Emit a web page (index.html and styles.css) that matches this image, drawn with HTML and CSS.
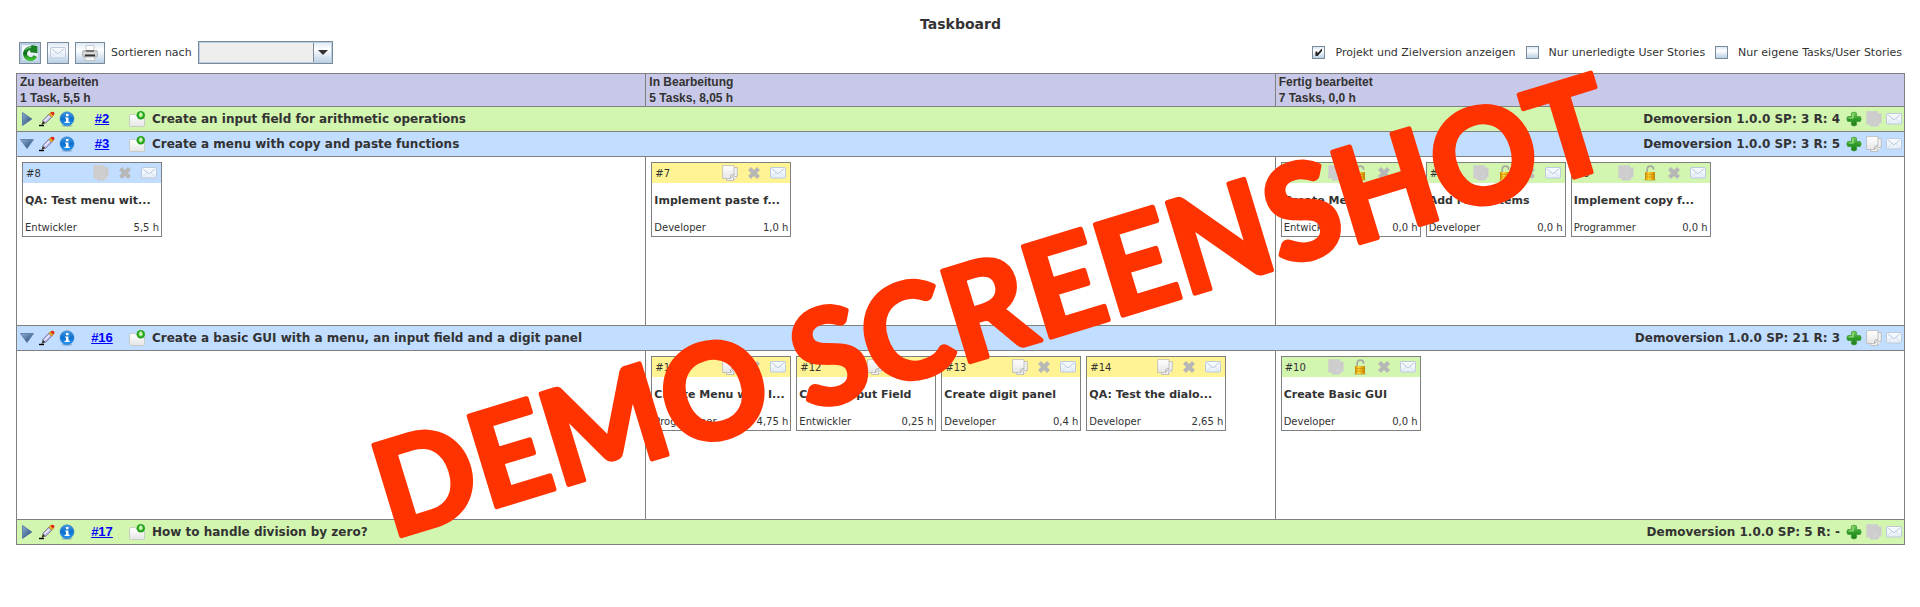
FILE: index.html
```html
<!DOCTYPE html>
<html lang="de">
<head>
<meta charset="utf-8">
<title>Taskboard</title>
<link rel="stylesheet" href="styles.css">
</head>
<body>
<svg class="sprite" width="0" height="0" aria-hidden="true">
  <defs>
    <linearGradient id="g-tri" x1="0" y1="0" x2="1" y2="1"><stop offset="0" stop-color="#8fb0d8"/><stop offset="1" stop-color="#23446f"/></linearGradient>
    <linearGradient id="g-info" x1="0" y1="0" x2="0" y2="1"><stop offset="0" stop-color="#4a9be0"/><stop offset=".5" stop-color="#0a6fd0"/><stop offset="1" stop-color="#2b9af0"/></linearGradient>
    <linearGradient id="g-page" x1="0" y1="0" x2="0" y2="1"><stop offset="0" stop-color="#ffffff"/><stop offset="1" stop-color="#e6e6e6"/></linearGradient>
    <linearGradient id="g-plus" x1="0" y1="0" x2="0" y2="1"><stop offset="0" stop-color="#7bd05c"/><stop offset=".5" stop-color="#2f9c28"/><stop offset="1" stop-color="#1d7d1b"/></linearGradient>
    <linearGradient id="g-lock" x1="0" y1="0" x2="1" y2="0"><stop offset="0" stop-color="#c88a00"/><stop offset=".35" stop-color="#ffd83a"/><stop offset="1" stop-color="#c98500"/></linearGradient>
    <linearGradient id="g-mail" x1="0" y1="0" x2="0" y2="1"><stop offset="0" stop-color="#ffffff"/><stop offset="1" stop-color="#e4edf8"/></linearGradient>
    <linearGradient id="g-arrow" x1="0" y1="0" x2="0" y2="1"><stop offset="0" stop-color="#1f8a2c"/><stop offset=".5" stop-color="#0c6d1c"/><stop offset="1" stop-color="#3fc12e"/></linearGradient>
    <radialGradient id="g-dot"><stop offset="0" stop-color="#c5f5a5"/><stop offset=".4" stop-color="#7bd657"/><stop offset=".65" stop-color="#1fa61a"/><stop offset="1" stop-color="#2aa11f"/></radialGradient>
  </defs>
  <symbol id="i-closed" viewBox="0 0 16 16"><path d="M3.500 1.500 12.800 8 3.500 14.500z" fill="url(#g-tri)" stroke="#4d6f9e" stroke-width=".8"/></symbol>
  <symbol id="i-open" viewBox="0 0 16 16"><path d="M1.500 3.500H14.500L8 12.500z" fill="url(#g-tri)" stroke="#5577a4" stroke-width=".8"/></symbol>
  <symbol id="i-pencil" viewBox="0 0 16 16">
    <path d="M0 14.500H5" stroke="#000" stroke-width="1.400"/>
    <path d="M2.500 14 3.800 9.800 6.300 12.300z" fill="#3a3020"/>
    <path d="M3.800 9.600 9.800 3.300 12.700 6.200 6.500 12.300z" fill="#c3bff0" stroke="#4c4a70" stroke-width=".7"/>
    <path d="M5.500 10 10.600 4.800" stroke="#eeeeff" stroke-width="1.200"/>
    <path d="M9.800 3.300 11.300 1.800 14.200 4.700 12.700 6.200z" fill="#f3b21a" stroke="#8a5a10" stroke-width=".4"/>
    <path d="M11.300 1.800Q13 0 15 1.200 16.200 3 14.200 4.700z" fill="#dc2a12"/>
  </symbol>
  <symbol id="i-info" viewBox="0 0 16 16">
    <ellipse cx="8" cy="14.800" rx="5.500" ry="1" fill="#5f88ac" opacity=".45"/>
    <circle cx="8" cy="7.800" r="7" fill="url(#g-info)" stroke="#2d78c4" stroke-width=".5"/>
    <path d="M7 3h2.500v2.200H7zM6 6.400h3.500v4.400h1.200V12H5.600v-1.200H7V7.600H6z" fill="#fff"/>
  </symbol>
  <symbol id="i-folder" viewBox="0 0 16 16">
    <path d="M.5 5Q.5 3.500 2 3.500H6L7.200 4.800H15.500V14.500Q15.500 15.500 14.500 15.500H1.500Q.5 15.500.5 14.500z" fill="url(#g-page)" stroke="#c3c9c0" stroke-width=".9"/>
    <circle cx="11.800" cy="4.200" r="4.200" fill="url(#g-dot)"/>
    <ellipse cx="11.800" cy="3.500" rx="1.500" ry="2.200" fill="#e4fad3" opacity=".75"/>
  </symbol>
  <symbol id="i-plus" viewBox="0 0 16 16">
    <path d="M5.400 2Q8 .2 10.600 2V5.500H14.200Q16.200 8 14.200 10.500H10.600V14Q8 16.200 5.400 14V10.500H1.800Q-.2 8 1.800 5.500H5.400z" fill="url(#g-plus)" stroke="#3d9a35" stroke-width=".7"/>
    <path d="M7 2.500V7H2.600" stroke="#a5e48a" stroke-width="1.200" fill="none"/>
  </symbol>
  <symbol id="i-page" viewBox="0 0 16 16">
    <path d="M4.500 2.500H15.300V11L11.500 15.500H4.500z" fill="#f1f1f1" stroke="#b5b5b5" stroke-width=".8"/>
    <path d="M.6.600H12V9.500L8.500 13.500H.6z" fill="url(#g-page)" stroke="#b9b9b9" stroke-width=".8"/>
    <path d="M8.500 13.500 8.800 10.200 12 9.500zM11.500 15.500 11.800 12 15.300 11" fill="#fff" stroke="#aaa" stroke-width=".8"/>
  </symbol>
  <symbol id="i-page-off" viewBox="0 0 16 16">
    <path d="M4 2.500H15.500V11.500L11.500 15.500H4z" fill="#cbcbcb"/>
    <path d="M.3.300H12V10L9 13.500H.3z" fill="#cdcdcd"/>
    <path d="M9 13.500 9.500 11 12 10M12 15 12.500 12.500 15.500 11.500" fill="none" stroke="#dadada" stroke-width=".8"/>
  </symbol>
  <symbol id="i-x" viewBox="0 0 16 16"><path d="M3.500 3.500 12.500 12.500M12.500 3.500 3.500 12.500" stroke="#b7b7b7" stroke-width="4.200"/></symbol>
  <symbol id="i-mail" viewBox="0 0 16 16">
    <rect x=".5" y="2.500" width="15" height="10.500" rx=".8" fill="url(#g-mail)" stroke="#bccbdc"/>
    <path d="M1.500 12 6 7.700M14.500 12 10 7.700" stroke="#d0dceb" stroke-width=".8" fill="none"/>
    <path d="M1.500 3.600 8 8.800 14.500 3.600" fill="#f4f8fd" stroke="#aec2da" stroke-width=".9"/>
  </symbol>
  <symbol id="i-lock" viewBox="0 0 16 16">
    <ellipse cx="8" cy="15" rx="6.500" ry=".8" fill="#a08a30" opacity=".5"/>
    <path d="M5.200 7.500V4.200Q5.200 1.200 8.300 1.200 11.600 1.200 11.600 4.800" fill="none" stroke="#a9a9a0" stroke-width="1.700"/>
    <rect x="3" y="7" width="10" height="8" fill="url(#g-lock)"/>
    <path d="M3 9.500h10M3 12h10" stroke="#b87900" stroke-width=".5"/>
  </symbol>
  <symbol id="i-refresh" viewBox="0 0 16 16">
    <path d="M13.300 11.200A5.400 5.400 0 1 1 10.200 3.600" fill="none" stroke="url(#g-arrow)" stroke-width="4"/>
    <path d="M9.500 0 15.500 1V8.200L8 7.200z" fill="#1b7f28"/>
    <path d="M3.500 5Q5.500 2 9 2.500" fill="none" stroke="#8fd58a" stroke-width="1"/>
  </symbol>
  <symbol id="i-print" viewBox="0 0 16 16">
    <path d="M4 .5H12V6H4z" fill="#fdfdfd" stroke="#b9bec4" stroke-width=".8"/>
    <rect x=".6" y="5.500" width="14.800" height="6.500" rx="1" fill="#c9c9c9" stroke="#a5a5a5" stroke-width=".7"/>
    <path d="M4 6H12" stroke="#555" stroke-width="1.400"/>
    <path d="M3 10.500H13" stroke="#333" stroke-width="2"/>
    <path d="M1 8.200H15" stroke="#e8e8e8" stroke-width="1"/>
    <path d="M3.500 12H12.500L13.200 15.500H2.800z" fill="#f7f7f7" stroke="#b5b5b5" stroke-width=".7"/>
  </symbol>
</svg>

<div class="page">
  <h1 class="title">Taskboard</h1>

  <div class="toolbar">
    <div class="tools">
      <button class="tool tool-active" type="button" aria-label="Aktualisieren"><svg class="icon"><use href="#i-refresh"/></svg></button>
      <button class="tool" type="button" aria-label="E-Mail"><svg class="icon"><use href="#i-mail"/></svg></button>
      <button class="tool tool-wide" type="button" aria-label="Drucken"><svg class="icon"><use href="#i-print"/></svg></button>
      <label for="sort">Sortieren nach</label>
      <span class="select-wrap">
        <select class="select" id="sort"><option></option></select>
        <svg class="select-arrow" viewBox="0 0 10 5" aria-hidden="true"><path d="M0 0H10L5 5z" fill="#333"/></svg>
      </span>
    </div>
    <div class="filters">
      <label class="filter"><input class="check" type="checkbox" checked>Projekt und Zielversion anzeigen</label>
      <label class="filter"><input class="check" type="checkbox">Nur unerledigte User Stories</label>
      <label class="filter"><input class="check" type="checkbox">Nur eigene Tasks/User Stories</label>
    </div>
  </div>

  <table class="board">
    <thead>
      <tr>
        <th scope="col">Zu bearbeiten<br>1 Task, 5,5 h</th>
        <th scope="col">In Bearbeitung<br>5 Tasks, 8,05 h</th>
        <th scope="col">Fertig bearbeitet<br>7 Tasks, 0,0 h</th>
      </tr>
    </thead>
    <tbody>
      <tr>
        <td class="story story-green" colspan="3">
          <div class="story-bar">
            <button class="ib" type="button" aria-label="Aufklappen"><svg class="icon"><use href="#i-closed"/></svg></button>
            <button class="ib" type="button" aria-label="Bearbeiten"><svg class="icon"><use href="#i-pencil"/></svg></button>
            <button class="ib" type="button" aria-label="Info"><svg class="icon"><use href="#i-info"/></svg></button>
            <a class="story-id" href="#2">#2</a>
            <svg class="icon" aria-hidden="true"><use href="#i-folder"/></svg>
            <span class="story-name">Create an input field for arithmetic operations</span>
            <span class="story-meta">Demoversion 1.0.0 SP: 3 R: 4</span>
            <button class="ib" type="button" aria-label="Neuer Task"><svg class="icon"><use href="#i-plus"/></svg></button>
            <button class="ib" type="button" aria-label="Notizen"><svg class="icon"><use href="#i-page-off"/></svg></button>
            <button class="ib" type="button" aria-label="E-Mail"><svg class="icon"><use href="#i-mail"/></svg></button>
          </div>
        </td>
      </tr>
      <tr>
        <td class="story story-blue" colspan="3">
          <div class="story-bar">
            <button class="ib" type="button" aria-label="Zuklappen"><svg class="icon"><use href="#i-open"/></svg></button>
            <button class="ib" type="button" aria-label="Bearbeiten"><svg class="icon"><use href="#i-pencil"/></svg></button>
            <button class="ib" type="button" aria-label="Info"><svg class="icon"><use href="#i-info"/></svg></button>
            <a class="story-id" href="#3">#3</a>
            <svg class="icon" aria-hidden="true"><use href="#i-folder"/></svg>
            <span class="story-name">Create a menu with copy and paste functions</span>
            <span class="story-meta">Demoversion 1.0.0 SP: 3 R: 5</span>
            <button class="ib" type="button" aria-label="Neuer Task"><svg class="icon"><use href="#i-plus"/></svg></button>
            <button class="ib" type="button" aria-label="Notizen"><svg class="icon"><use href="#i-page"/></svg></button>
            <button class="ib" type="button" aria-label="E-Mail"><svg class="icon"><use href="#i-mail"/></svg></button>
          </div>
        </td>
      </tr>
      <tr>
        <td class="lane"><div class="cards">
          <article class="card card-blue">
            <header class="card-head"><span class="card-id">#8</span><button class="ib" type="button" aria-label="Notizen"><svg class="icon"><use href="#i-page-off"/></svg></button><button class="ib" type="button" aria-label="Löschen"><svg class="icon"><use href="#i-x"/></svg></button><button class="ib" type="button" aria-label="E-Mail"><svg class="icon"><use href="#i-mail"/></svg></button></header>
            <h2 class="card-title">QA: Test menu wit...</h2>
            <footer class="card-foot"><span>Entwickler</span><span>5,5 h</span></footer>
          </article>
        </div></td>
        <td class="lane"><div class="cards">
          <article class="card card-yellow">
            <header class="card-head"><span class="card-id">#7</span><button class="ib" type="button" aria-label="Notizen"><svg class="icon"><use href="#i-page"/></svg></button><button class="ib" type="button" aria-label="Löschen"><svg class="icon"><use href="#i-x"/></svg></button><button class="ib" type="button" aria-label="E-Mail"><svg class="icon"><use href="#i-mail"/></svg></button></header>
            <h2 class="card-title">Implement paste f...</h2>
            <footer class="card-foot"><span>Developer</span><span>1,0 h</span></footer>
          </article>
        </div></td>
        <td class="lane"><div class="cards">
          <article class="card card-green">
            <header class="card-head"><span class="card-id">#4</span><button class="ib" type="button" aria-label="Notizen"><svg class="icon"><use href="#i-page-off"/></svg></button><button class="ib" type="button" aria-label="Entsperren"><svg class="icon"><use href="#i-lock"/></svg></button><button class="ib" type="button" aria-label="Löschen"><svg class="icon"><use href="#i-x"/></svg></button><button class="ib" type="button" aria-label="E-Mail"><svg class="icon"><use href="#i-mail"/></svg></button></header>
            <h2 class="card-title">Create Menu</h2>
            <footer class="card-foot"><span>Entwickler</span><span>0,0 h</span></footer>
          </article>
          <article class="card card-green">
            <header class="card-head"><span class="card-id">#5</span><button class="ib" type="button" aria-label="Notizen"><svg class="icon"><use href="#i-page-off"/></svg></button><button class="ib" type="button" aria-label="Entsperren"><svg class="icon"><use href="#i-lock"/></svg></button><button class="ib" type="button" aria-label="Löschen"><svg class="icon"><use href="#i-x"/></svg></button><button class="ib" type="button" aria-label="E-Mail"><svg class="icon"><use href="#i-mail"/></svg></button></header>
            <h2 class="card-title">Add Menu Items</h2>
            <footer class="card-foot"><span>Developer</span><span>0,0 h</span></footer>
          </article>
          <article class="card card-green">
            <header class="card-head"><span class="card-id">#6</span><button class="ib" type="button" aria-label="Notizen"><svg class="icon"><use href="#i-page-off"/></svg></button><button class="ib" type="button" aria-label="Entsperren"><svg class="icon"><use href="#i-lock"/></svg></button><button class="ib" type="button" aria-label="Löschen"><svg class="icon"><use href="#i-x"/></svg></button><button class="ib" type="button" aria-label="E-Mail"><svg class="icon"><use href="#i-mail"/></svg></button></header>
            <h2 class="card-title">Implement copy f...</h2>
            <footer class="card-foot"><span>Programmer</span><span>0,0 h</span></footer>
          </article>
        </div></td>
      </tr>
      <tr>
        <td class="story story-blue" colspan="3">
          <div class="story-bar">
            <button class="ib" type="button" aria-label="Zuklappen"><svg class="icon"><use href="#i-open"/></svg></button>
            <button class="ib" type="button" aria-label="Bearbeiten"><svg class="icon"><use href="#i-pencil"/></svg></button>
            <button class="ib" type="button" aria-label="Info"><svg class="icon"><use href="#i-info"/></svg></button>
            <a class="story-id" href="#16">#16</a>
            <svg class="icon" aria-hidden="true"><use href="#i-folder"/></svg>
            <span class="story-name">Create a basic GUI with a menu, an input field and a digit panel</span>
            <span class="story-meta">Demoversion 1.0.0 SP: 21 R: 3</span>
            <button class="ib" type="button" aria-label="Neuer Task"><svg class="icon"><use href="#i-plus"/></svg></button>
            <button class="ib" type="button" aria-label="Notizen"><svg class="icon"><use href="#i-page"/></svg></button>
            <button class="ib" type="button" aria-label="E-Mail"><svg class="icon"><use href="#i-mail"/></svg></button>
          </div>
        </td>
      </tr>
      <tr>
        <td class="lane"></td>
        <td class="lane"><div class="cards">
          <article class="card card-yellow">
            <header class="card-head"><span class="card-id">#11</span><button class="ib" type="button" aria-label="Notizen"><svg class="icon"><use href="#i-page"/></svg></button><button class="ib" type="button" aria-label="Löschen"><svg class="icon"><use href="#i-x"/></svg></button><button class="ib" type="button" aria-label="E-Mail"><svg class="icon"><use href="#i-mail"/></svg></button></header>
            <h2 class="card-title">Create Menu with I...</h2>
            <footer class="card-foot"><span>Programmer</span><span>4,75 h</span></footer>
          </article>
          <article class="card card-yellow">
            <header class="card-head"><span class="card-id">#12</span><button class="ib" type="button" aria-label="Notizen"><svg class="icon"><use href="#i-page"/></svg></button><button class="ib" type="button" aria-label="Löschen"><svg class="icon"><use href="#i-x"/></svg></button><button class="ib" type="button" aria-label="E-Mail"><svg class="icon"><use href="#i-mail"/></svg></button></header>
            <h2 class="card-title">Create Input Field</h2>
            <footer class="card-foot"><span>Entwickler</span><span>0,25 h</span></footer>
          </article>
          <article class="card card-yellow">
            <header class="card-head"><span class="card-id">#13</span><button class="ib" type="button" aria-label="Notizen"><svg class="icon"><use href="#i-page"/></svg></button><button class="ib" type="button" aria-label="Löschen"><svg class="icon"><use href="#i-x"/></svg></button><button class="ib" type="button" aria-label="E-Mail"><svg class="icon"><use href="#i-mail"/></svg></button></header>
            <h2 class="card-title">Create digit panel</h2>
            <footer class="card-foot"><span>Developer</span><span>0,4 h</span></footer>
          </article>
          <article class="card card-yellow">
            <header class="card-head"><span class="card-id">#14</span><button class="ib" type="button" aria-label="Notizen"><svg class="icon"><use href="#i-page"/></svg></button><button class="ib" type="button" aria-label="Löschen"><svg class="icon"><use href="#i-x"/></svg></button><button class="ib" type="button" aria-label="E-Mail"><svg class="icon"><use href="#i-mail"/></svg></button></header>
            <h2 class="card-title">QA: Test the dialo...</h2>
            <footer class="card-foot"><span>Developer</span><span>2,65 h</span></footer>
          </article>
        </div></td>
        <td class="lane"><div class="cards">
          <article class="card card-green">
            <header class="card-head"><span class="card-id">#10</span><button class="ib" type="button" aria-label="Notizen"><svg class="icon"><use href="#i-page-off"/></svg></button><button class="ib" type="button" aria-label="Entsperren"><svg class="icon"><use href="#i-lock"/></svg></button><button class="ib" type="button" aria-label="Löschen"><svg class="icon"><use href="#i-x"/></svg></button><button class="ib" type="button" aria-label="E-Mail"><svg class="icon"><use href="#i-mail"/></svg></button></header>
            <h2 class="card-title">Create Basic GUI</h2>
            <footer class="card-foot"><span>Developer</span><span>0,0 h</span></footer>
          </article>
        </div></td>
      </tr>
      <tr>
        <td class="story story-green" colspan="3">
          <div class="story-bar">
            <button class="ib" type="button" aria-label="Aufklappen"><svg class="icon"><use href="#i-closed"/></svg></button>
            <button class="ib" type="button" aria-label="Bearbeiten"><svg class="icon"><use href="#i-pencil"/></svg></button>
            <button class="ib" type="button" aria-label="Info"><svg class="icon"><use href="#i-info"/></svg></button>
            <a class="story-id" href="#17">#17</a>
            <svg class="icon" aria-hidden="true"><use href="#i-folder"/></svg>
            <span class="story-name">How to handle division by zero?</span>
            <span class="story-meta">Demoversion 1.0.0 SP: 5 R: -</span>
            <button class="ib" type="button" aria-label="Neuer Task"><svg class="icon"><use href="#i-plus"/></svg></button>
            <button class="ib" type="button" aria-label="Notizen"><svg class="icon"><use href="#i-page-off"/></svg></button>
            <button class="ib" type="button" aria-label="E-Mail"><svg class="icon"><use href="#i-mail"/></svg></button>
          </div>
        </td>
      </tr>
    </tbody>
  </table>

  <svg class="watermark" viewBox="0 0 1400 600">
    <text class="watermark-text" x="700" y="347" text-anchor="middle" transform="rotate(-17 700 300)">DEMO SCREENSHOT</text>
  </svg>
</div>
</body>
</html>
```
FILE: styles.css
```css
* {
  box-sizing: border-box;
}

body {
  margin: 0;
  background: #fff;
  color: #333;
  font-family: Verdana, "DejaVu Sans", sans-serif;
  font-size: 10px;
}

.sprite {
  position: absolute;
}

.page {
  position: relative;
  padding: 16px 15px 16px 16px;
}

.title {
  margin: 0;
  font-size: 14px;
  line-height: 16px;
  text-align: center;
}

.icon {
  display: block;
  width: 16px;
  height: 16px;
  flex: none;
}

.ib {
  padding: 0;
  border: 0;
  background: none;
  flex: none;
}

/* Toolbar */

.toolbar {
  display: flex;
  justify-content: space-between;
  align-items: center;
  padding: 9px 3px;
  font-size: 11px;
}

.tools {
  display: flex;
  align-items: center;
  gap: 6px;
}

.tool {
  display: flex;
  align-items: center;
  justify-content: center;
  width: 22px;
  height: 22px;
  padding: 0;
  border: 1px solid #7a8a99;
  background: linear-gradient(#dde8f3, #fff 35%, #b8cfe5);
}

.tool-active {
  box-shadow: inset 0 0 0 2px #b8cfe5;
}

.tool-wide {
  width: 30px;
}

.select-wrap {
  position: relative;
  display: flex;
}

.select {
  appearance: none;
  width: 135px;
  height: 23px;
  padding: 0 24px 0 4px;
  border: 1px solid #7a8a99;
  border-radius: 0;
  background:
    linear-gradient(#7a8a99, #7a8a99) right 18px top / 1px 100% no-repeat,
    linear-gradient(#dde8f3, #fff 35%, #b8cfe5) right / 18px 100% no-repeat,
    #eee;
  box-shadow: inset 0 0 0 1px #b8cfe5;
  font: inherit;
}

.select-arrow {
  position: absolute;
  top: 9px;
  right: 5px;
  width: 10px;
  height: 5px;
  pointer-events: none;
}

.filters {
  display: flex;
  gap: 10px;
}

.filter {
  display: flex;
  align-items: center;
  gap: 10px;
}

.check {
  appearance: none;
  width: 13px;
  height: 13px;
  margin: 0;
  border: 1px solid #7a8a99;
  background: linear-gradient(#dde8f3, #fff 35%, #b8cfe5);
}

.check:checked::before {
  content: "";
  display: block;
  width: 7px;
  height: 7px;
  margin: 2px;
  background: #222;
  clip-path: polygon(0 35%, 25% 35%, 30% 60%, 85% 0, 100% 0, 100% 20%, 30% 100%, 0 100%);
}

/* Board */

.board {
  width: 100%;
  table-layout: fixed;
  border-collapse: collapse;
}

.board th,
.board td {
  border: 1px solid #808080;
  padding: 0;
}

.board th {
  padding: 0 3px;
  background: #c8c8e8;
  font: bold 12px/16px Arial, "Liberation Sans", sans-serif;
  text-align: left;
}

.story-green {
  background: #d2f5b0;
}

.story-blue {
  background: #c1ddff;
}

.story-bar {
  display: flex;
  align-items: center;
  gap: 4px;
  height: 24px;
  padding: 0 2px;
  font-size: 12px;
  font-weight: bold;
}

.story-id {
  width: 46px;
  color: #00f;
  font: bold 13px/16px Arial, "Liberation Sans", sans-serif;
  text-align: center;
}

.story-name {
  flex: 1;
  padding-left: 3px;
}

.story-meta {
  padding-right: 2px;
}

.lane {
  height: 169px;
  vertical-align: top;
}

.cards {
  display: flex;
  flex-wrap: wrap;
  gap: 5px;
  padding: 5px;
}

.card {
  width: 140px;
  border: 1px solid #808080;
  background: #fff;
}

.card-head {
  display: flex;
  align-items: center;
  gap: 8px;
  height: 20px;
  padding: 0 4px 0 3px;
}

.card-id {
  flex: 1;
}

.card-blue .card-head {
  background: #c1ddff;
}

.card-yellow .card-head {
  background: #fff394;
}

.card-green .card-head {
  background: #d2f5b0;
}

.card-title {
  margin: 0;
  padding: 10px 2px;
  font-size: 11px;
  line-height: 16px;
  white-space: nowrap;
}

.card-foot {
  display: flex;
  justify-content: space-between;
  padding: 0 2px;
  line-height: 17px;
}

/* Diagonal stamp across the board */

.watermark {
  position: absolute;
  top: 6px;
  left: 50%;
  width: 1400px;
  height: 600px;
  margin-left: -668px;
  pointer-events: none;
}

.watermark-text {
  fill: #f30;
  stroke: #f30;
  stroke-width: 5px;
  stroke-linejoin: round;
  font: bold 131px Lato, Calibri, sans-serif;
}
```
